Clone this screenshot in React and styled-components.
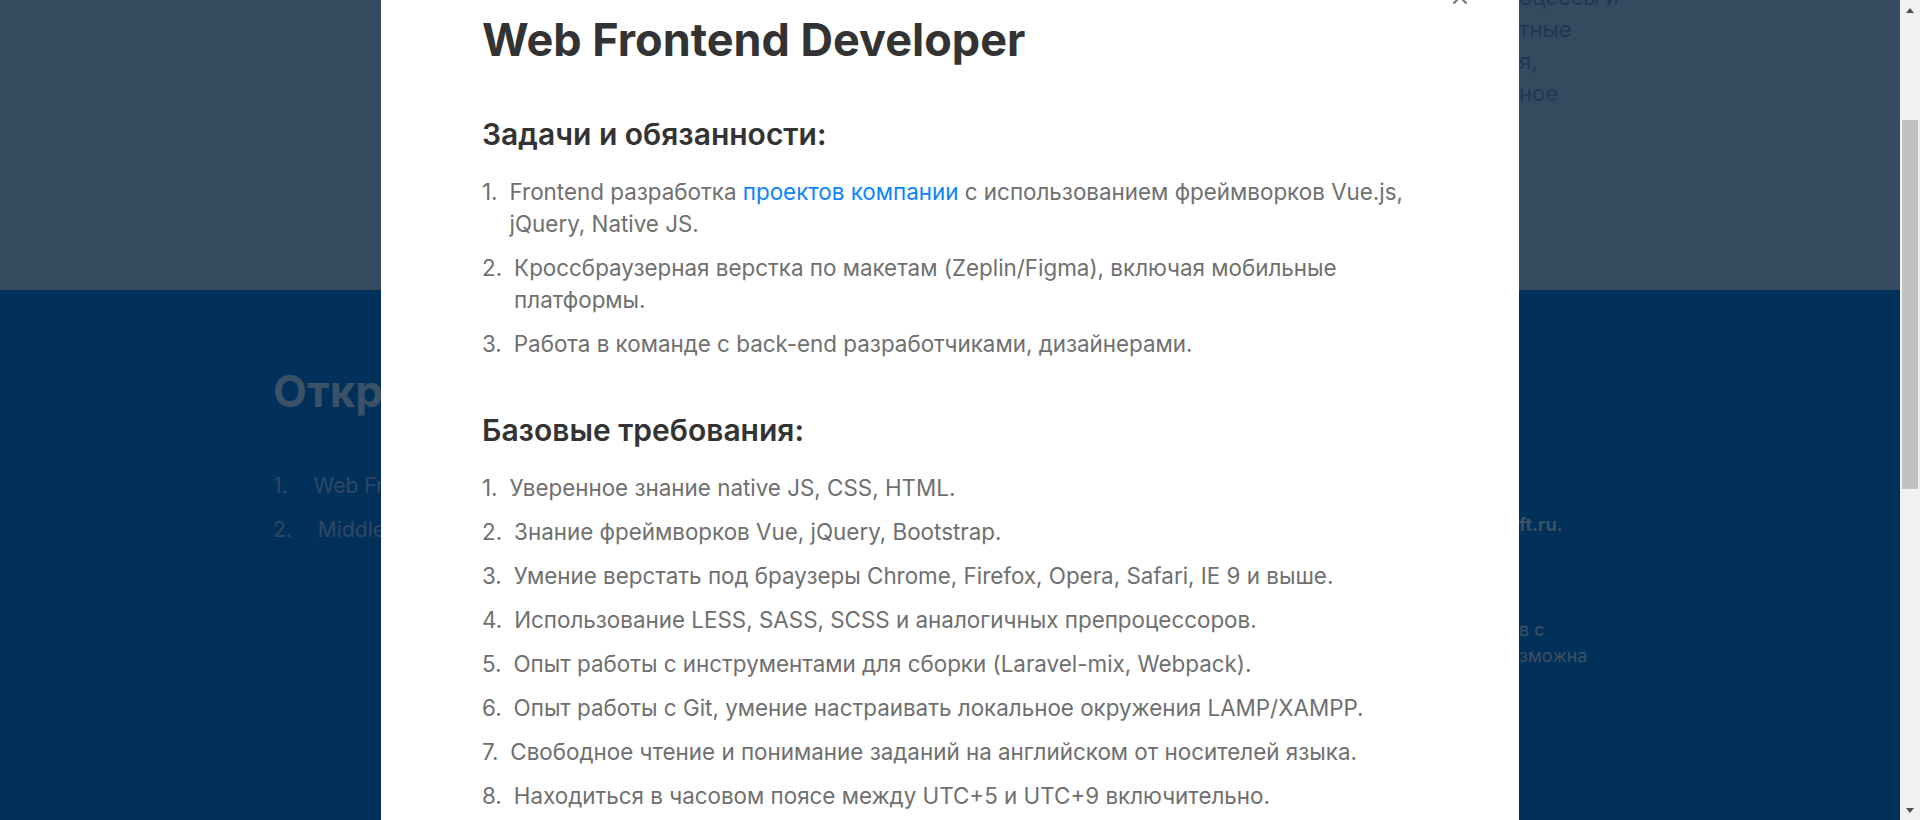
import React from "react";
import styled, { createGlobalStyle } from "styled-components";

const GlobalStyle = createGlobalStyle`
  html, body { margin: 0; padding: 0; height: 100%; overflow: hidden; }
  body { font-family: Inter, "Noto Sans", sans-serif; }
  *, *::before, *::after { box-sizing: border-box; }
`;

const Viewport = styled.div`
  display: flex;
  width: 1920px;
  height: 820px;
  overflow: hidden;
`;

const Screen = styled.div`
  position: relative;
  flex: 1;
  overflow: hidden;
`;

const Page = styled.main`
  display: flex;
  flex-direction: column;
  height: 100%;
`;

const TopBand = styled.section`
  height: 290px;
  flex-shrink: 0;
  background: rgb(106, 148, 190);
  overflow: hidden;
`;

const BottomBand = styled.section`
  flex: 1;
  background: rgb(2, 96, 180);
`;

const Container = styled.div`
  max-width: 1354px;
  margin: 0 auto;
  display: grid;
  grid-template-columns: 1246px 1fr;
  padding-top: ${(p) => p.$top || 0}px;
  margin-top: ${(p) => p.$shift || 0}px;
`;

const Column = styled.div`
  display: flex;
  flex-direction: column;
  padding-top: ${(p) => p.$top || 0}px;
`;

const AboutLine = styled.span`
  font-size: 22px;
  line-height: 32px;
  color: rgb(60, 112, 172);
  white-space: nowrap;
`;

const SectionTitle = styled.h2`
  margin: 0 0 52px;
  font-size: 44px;
  line-height: 53px;
  font-weight: 700;
  color: rgb(116, 162, 208);
`;

const VacancyList = styled.ol`
  list-style: none;
  margin: 0;
  padding: 0;
  display: flex;
  flex-direction: column;
  gap: 12px;
`;

const VacancyItem = styled.li`
  display: flex;
  gap: 26px;
  font-size: 21px;
  line-height: 32px;
  color: rgb(92, 144, 200);
`;

const InfoLine = styled.span`
  font-size: 18px;
  line-height: 26px;
  white-space: nowrap;
  font-weight: ${(p) => (p.$bold ? 700 : 400)};
  color: rgb(120, 160, 200);
  margin-top: ${(p) => p.$gap || 0}px;
`;

const Overlay = styled.div`
  position: absolute;
  inset: 0;
  background: rgba(0, 0, 0, 0.5);
  display: flex;
  justify-content: center;
  align-items: flex-start;
  overflow: hidden;
`;

const Modal = styled.article`
  position: relative;
  width: 1138px;
  margin-top: -40px;
  padding: 52px 101px 60px;
  background: #fff;
`;

const CloseButton = styled.button`
  position: absolute;
  top: 29px;
  right: 51px;
  width: 16px;
  height: 16px;
  padding: 0;
  border: 0;
  background: none;
  cursor: pointer;
  display: flex;
`;

const Title = styled.h1`
  margin: 0 0 48px;
  font-size: 45px;
  line-height: 56px;
  font-weight: 700;
  color: #333;
`;

const Section = styled.section`
  & + & {
    margin-top: 52px;
  }
`;

const Heading = styled.h3`
  margin: 0 0 24px;
  font-size: 30px;
  line-height: 36px;
  font-weight: 600;
  color: #333;
`;

const List = styled.ol`
  list-style: none;
  margin: 0;
  padding: 0;
  display: flex;
  flex-direction: column;
  gap: 12px;
`;

const Item = styled.li`
  display: flex;
  gap: 12px;
  font-size: 22.4px;
  line-height: 32px;
  color: #6f6f6f;
`;

const Num = styled.span`
  flex-shrink: 0;
`;

const Link = styled.a`
  color: #0a84ff;
  text-decoration: none;
`;

const Scrollbar = styled.div`
  width: 20px;
  flex-shrink: 0;
  background: #f1f1f1;
  display: flex;
  flex-direction: column;
  align-items: center;
`;

const Arrow = styled.div`
  height: 20px;
  width: 100%;
  display: flex;
  align-items: center;
  justify-content: center;
`;

const Track = styled.div`
  flex: 1;
  width: 100%;
  padding: 100px 2px 311px;
  display: flex;
`;

const Thumb = styled.div`
  flex: 1;
  background: #c1c1c1;
`;

const duties = [
  [
    "Frontend разработка ",
    { link: "проектов компании" },
    " с использованием фреймворков Vue.js, jQuery, Native JS.",
  ],
  ["Кроссбраузерная верстка по макетам (Zeplin/Figma), включая мобильные платформы."],
  ["Работа в команде с back-end разработчиками, дизайнерами."],
];

const requirements = [
  "Уверенное знание native JS, CSS, HTML.",
  "Знание фреймворков Vue, jQuery, Bootstrap.",
  "Умение верстать под браузеры Chrome, Firefox, Opera, Safari, IE 9 и выше.",
  "Использование LESS, SASS, SCSS и аналогичных препроцессоров.",
  "Опыт работы с инструментами для сборки (Laravel-mix, Webpack).",
  "Опыт работы с Git, умение настраивать локальное окружения LAMP/XAMPP.",
  "Свободное чтение и понимание заданий на английском от носителей языка.",
  "Находиться в часовом поясе между UTC+5 и UTC+9 включительно.",
];

function renderParts(parts) {
  return parts.map((p, i) =>
    typeof p === "string" ? (
      <React.Fragment key={i}>{p}</React.Fragment>
    ) : (
      <Link key={i} href="#">
        {p.link}
      </Link>
    )
  );
}

export default function App() {
  return (
    <>
      <GlobalStyle />
      <Viewport>
        <Screen>
          <Page>
            <TopBand>
              <Container $shift={-19}>
                <Column />
                <Column>
                  <AboutLine>оцессы и</AboutLine>
                  <AboutLine>тные</AboutLine>
                  <AboutLine>я,</AboutLine>
                  <AboutLine>ное</AboutLine>
                </Column>
              </Container>
            </TopBand>
            <BottomBand>
              <Container $top={75}>
                <Column>
                  <SectionTitle>Открытые вакансии</SectionTitle>
                  <VacancyList>
                    <VacancyItem>
                      <span>1.</span>
                      <span>Web Frontend Developer</span>
                    </VacancyItem>
                    <VacancyItem>
                      <span>2.</span>
                      <span>Middle PHP Developer</span>
                    </VacancyItem>
                  </VacancyList>
                </Column>
                <Column $top={147}>
                  <InfoLine $bold>ft.ru.</InfoLine>
                  <InfoLine $gap={79}>в с</InfoLine>
                  <InfoLine>зможна</InfoLine>
                </Column>
              </Container>
            </BottomBand>
          </Page>
          <Overlay>
            <Modal>
              <CloseButton aria-label="Закрыть">
                <svg width="16" height="16" viewBox="0 0 16 16">
                  <path d="M2 2 L14 14 M14 2 L2 14" stroke="#777" strokeWidth="2" strokeLinecap="round" />
                </svg>
              </CloseButton>
              <Title>Web Frontend Developer</Title>
              <Section>
                <Heading>Задачи и обязанности:</Heading>
                <List>
                  {duties.map((parts, i) => (
                    <Item key={i}>
                      <Num>{i + 1}.</Num>
                      <span>{renderParts(parts)}</span>
                    </Item>
                  ))}
                </List>
              </Section>
              <Section>
                <Heading>Базовые требования:</Heading>
                <List>
                  {requirements.map((t, i) => (
                    <Item key={i}>
                      <Num>{i + 1}.</Num>
                      <span>{t}</span>
                    </Item>
                  ))}
                </List>
              </Section>
            </Modal>
          </Overlay>
        </Screen>
        <Scrollbar>
          <Arrow>
            <svg width="8" height="5" viewBox="0 0 8 5">
              <polygon points="0,5 8,5 4,0" fill="#505050" />
            </svg>
          </Arrow>
          <Track>
            <Thumb />
          </Track>
          <Arrow>
            <svg width="8" height="5" viewBox="0 0 8 5">
              <polygon points="0,0 8,0 4,5" fill="#505050" />
            </svg>
          </Arrow>
        </Scrollbar>
      </Viewport>
    </>
  );
}
